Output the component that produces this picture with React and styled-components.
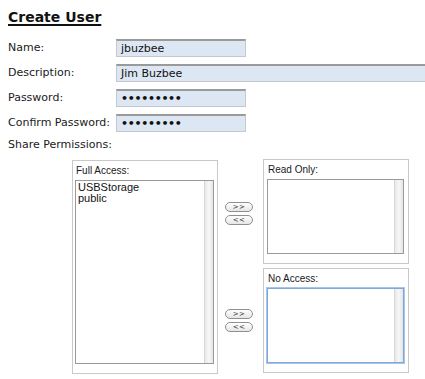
import React from "react";
import styled, { createGlobalStyle } from "styled-components";

const Global = createGlobalStyle`
  html, body { margin: 0; padding: 0; background: #fff; }
  body { padding: 8px; font-family: "DejaVu Sans", Verdana, sans-serif; color: #1a1a1a; }
  * { box-sizing: border-box; }
`;

const Title = styled.h2`
  margin: 0 0 13px 0;
  font-size: 14px;
  line-height: 18px;
  font-weight: bold;
  text-decoration: underline;
  text-underline-offset: 2px;
  text-decoration-thickness: 2px;
  color: #111;
`;

const FormGrid = styled.div`
  display: grid;
  grid-template-columns: 108px auto;
  row-gap: 7px;
  align-items: center;
`;

const Label = styled.label`
  font-size: 11px;
  line-height: 14px;
  color: #1a1a1a;
  white-space: nowrap;
`;

const Field = styled.div`
  height: 18px;
  width: ${(p) => p.$w}px;
  background: #dde7f4;
  border: 1px solid #c4c8ce;
  border-top: 2px solid #9a9a9a;
  font-size: 11px;
  line-height: 15px;
  padding-left: 4px;
  color: #111;
  white-space: nowrap;
  overflow: hidden;
`;

const Dots = styled.span`
  font-size: 11px;
  letter-spacing: -0.3px;
  font-weight: bold;
`;

const ShareLabel = styled(Label)`
  display: block;
  margin-top: 6px;
`;

const Perms = styled.div`
  margin: 7px 0 0 64px;
  display: grid;
  grid-template-columns: 146px 45px 146px;
  grid-template-rows: 105px 105px;
  row-gap: 4px;
`;

const Panel = styled.div`
  border: 1px solid #c9c9c9;
  padding: ${(p) => p.$pad};
  grid-row: ${(p) => p.$row};
  margin: ${(p) => p.$m || "0"};
  display: flex;
  flex-direction: column;
`;

const PanelLabel = styled.div`
  font-family: "Liberation Sans", Arial, sans-serif;
  font-size: 10px;
  line-height: 11px;
  height: 19px;
  padding-top: 4px;
  padding-left: 1px;
  color: #1a1a1a;
`;

const ListBox = styled.div`
  flex: 1;
  position: relative;
  border: 1px solid ${(p) => (p.$focus ? "#7fa7d8" : "#9a9a9a")};
  box-shadow: ${(p) => (p.$focus ? "0 0 0 1px #a8c6ea" : "none")};
  background: #fff;
  padding: 1px 2px;
  margin-bottom: 9px;
  font-family: "Liberation Sans", Arial, sans-serif;
  font-size: 11px;
  line-height: 11px;
  color: #111;
`;

const Scroll = styled.div`
  position: absolute;
  top: 0;
  right: 0;
  bottom: 0;
  width: 9px;
  border-left: 1px solid #d8d8d8;
  background: linear-gradient(to right, #e8e8e8, #f7f7f7 50%, #e4e4e4);
`;

const ButtonCol = styled.div`
  grid-column: 2;
  grid-row: ${(p) => p.$row};
  display: flex;
  flex-direction: column;
  align-items: flex-start;
  justify-content: center;
  gap: 3px;
  padding-left: 7px;
  padding-top: ${(p) => p.$pt || 0}px;
`;

const Pill = styled.button`
  width: 28px;
  height: 10px;
  padding: 0;
  border: 1px solid #8f8f8f;
  border-radius: 5px;
  background: linear-gradient(to bottom, #ffffff, #e6e6e6);
  font-family: "DejaVu Sans", sans-serif;
  font-size: 7px;
  line-height: 8px;
  letter-spacing: 0.5px;
  color: #333;
  display: flex;
  align-items: center;
  justify-content: center;
`;

const RightPanel = styled(Panel)`
  grid-column: 3;
`;

export default function App() {
  return (
    <>
      <Global />
      <Title>Create User</Title>
      <FormGrid>
        <Label>Name:</Label>
        <Field $w={130}>jbuzbee</Field>
        <Label>Description:</Label>
        <Field $w={330}>Jim Buzbee</Field>
        <Label>Password:</Label>
        <Field $w={130}><Dots>•••••••••</Dots></Field>
        <Label>Confirm Password:</Label>
        <Field $w={130}><Dots>•••••••••</Dots></Field>
      </FormGrid>
      <ShareLabel>Share Permissions:</ShareLabel>
      <Perms>
        <Panel $row="1 / span 2" $pad="0 3px 0 2px" $m="1px 0 -1px 0">
          <PanelLabel>Full Access:</PanelLabel>
          <ListBox>
            <div>USBStorage</div>
            <div>public</div>
            <Scroll />
          </ListBox>
        </Panel>
        <ButtonCol $row={1} $pt={4}>
          <Pill>&gt;&gt;</Pill>
          <Pill>&lt;&lt;</Pill>
        </ButtonCol>
        <ButtonCol $row={2}>
          <Pill>&gt;&gt;</Pill>
          <Pill>&lt;&lt;</Pill>
        </ButtonCol>
        <RightPanel $row={1} $pad="0 4px 0 3px">
          <PanelLabel>Read Only:</PanelLabel>
          <ListBox>
            <Scroll />
          </ListBox>
        </RightPanel>
        <RightPanel $row={2} $pad="0 4px 0 3px">
          <PanelLabel>No Access:</PanelLabel>
          <ListBox $focus>
            <Scroll />
          </ListBox>
        </RightPanel>
      </Perms>
    </>
  );
}
